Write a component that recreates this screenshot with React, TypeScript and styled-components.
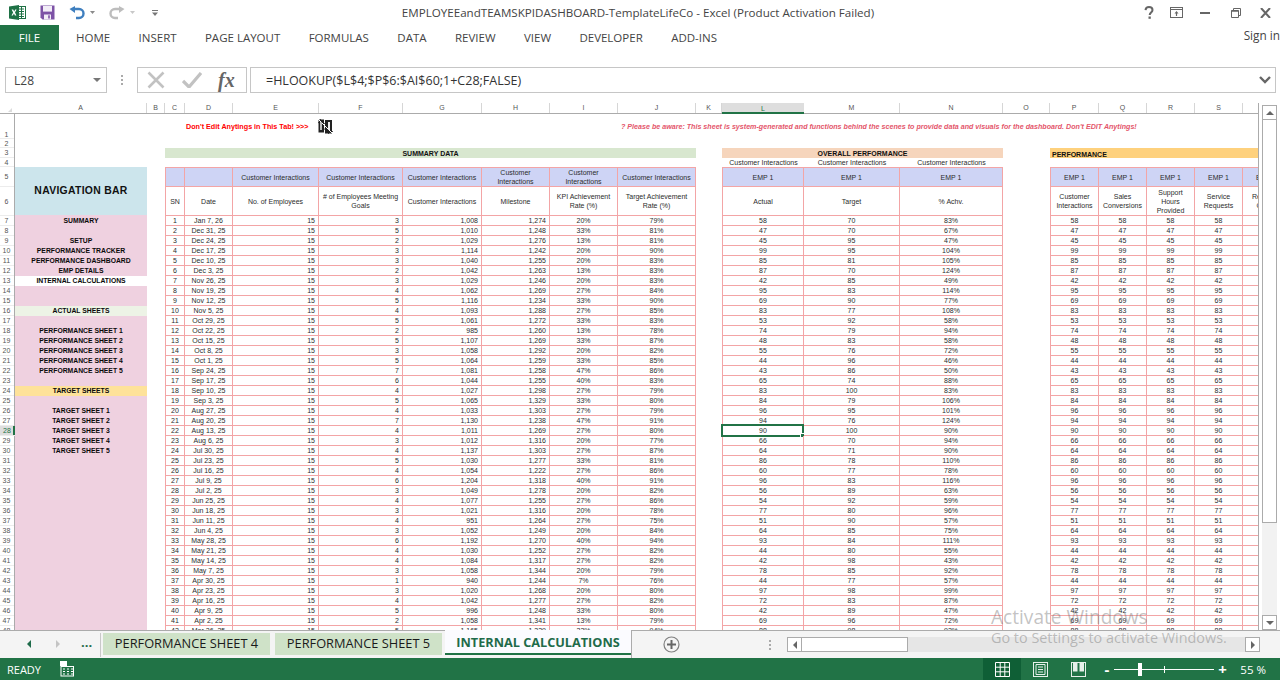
import React from "react";
import styled, { createGlobalStyle } from "styled-components";

const Global = createGlobalStyle`
  html, body { margin: 0; padding: 0; background: #fff; }
  #root { width: 1280px; height: 680px; overflow: hidden; }
`;

const UI = `"Open Sans", "Noto Sans", sans-serif`;
const CELL = `"Liberation Sans", Arial, sans-serif`;
const PINK = "#f3a5a6";
const GRAY = "#ababab";
const GREEN = "#217346";
const INK = "#2c2c2c";

const Frame = styled.div`
  position: relative;
  width: 1280px;
  height: 680px;
  display: flex;
  flex-direction: column;
  background: #fff;
  overflow: hidden;
  font-family: ${UI};
`;

/* ---------- Title bar ---------- */
const TitleBar = styled.div`
  height: 25px;
  flex: none;
  display: grid;
  grid-template-columns: 1fr auto 1fr;
  align-items: center;
`;
const Qat = styled.div`
  display: flex;
  align-items: center;
  padding-left: 9px;
`;
const QatIcon = styled.svg<{ $gap?: number }>`
  display: block;
  margin-left: ${(p) => p.$gap ?? 0}px;
`;
const TitleText = styled.div`
  font-size: 11.6px;
  color: #444;
  white-space: nowrap;
  margin-right: 4px;
`;
const WindowButtons = styled.div`
  display: flex;
  align-items: center;
  justify-content: flex-end;
  padding-right: 9px;
`;

/* ---------- Ribbon tabs ---------- */
const RibbonTabs = styled.div`
  height: 25px;
  flex: none;
  display: flex;
  align-items: center;
  position: relative;
`;
const FileTab = styled.div`
  width: 59px;
  height: 25px;
  background: ${GREEN};
  color: #fff;
  display: flex;
  align-items: center;
  justify-content: center;
  font-size: 11.5px;
  margin-right: 17px;
`;
const RibbonTab = styled.div`
  font-size: 11.5px;
  color: #444;
  margin-right: 28.4px;
  white-space: nowrap;
`;
const SignIn = styled.div`
  margin-left: auto;
  font-size: 11.8px;
  color: #444;
  white-space: nowrap;
  margin-top: -6px;
`;

/* ---------- Formula bar ---------- */
const FormulaRow = styled.div`
  height: 26px;
  flex: none;
  margin-top: 17px;
  display: flex;
  align-items: stretch;
  padding-left: 5px;
`;
const NameBox = styled.div`
  width: 102px;
  box-sizing: border-box;
  border: 1px solid #c6c6c6;
  display: flex;
  align-items: center;
  justify-content: space-between;
  padding: 0 5px 0 8px;
  font-size: 12px;
  color: #444;
`;
const DownCaret = styled.span`
  width: 0;
  height: 0;
  border-left: 4px solid transparent;
  border-right: 4px solid transparent;
  border-top: 4px solid #777;
`;
const Grip = styled.div`
  width: 30px;
  display: flex;
  flex-direction: column;
  align-items: center;
  justify-content: center;
  gap: 2px;
  span { width: 2px; height: 2px; background: #aaa; }
`;
const FnBox = styled.div`
  width: 110px;
  box-sizing: border-box;
  border: 1px solid #c6c6c6;
  display: flex;
  align-items: center;
  padding-left: 9px;
  gap: 17px;
`;
const FxText = styled.span`
  font-family: "Liberation Serif", serif;
  font-style: italic;
  font-weight: 700;
  font-size: 20px;
  color: #666;
  margin-left: -1px;
`;
const FormulaInput = styled.div`
  width: 1026px;
  margin-left: 3px;
  box-sizing: border-box;
  border: 1px solid #c6c6c6;
  display: flex;
  align-items: center;
  justify-content: space-between;
  padding: 0 4px 0 15px;
  font-size: 12.5px;
  color: #333;
`;

/* ---------- Sheet ---------- */
const SheetRow = styled.div`
  height: 527px;
  flex: none;
  margin-top: 10px;
  display: flex;
`;
const Pane = styled.div`
  width: 1259px;
  box-sizing: border-box;
  display: flex;
  flex-direction: column;
  overflow: hidden;
  border-right: 1px solid ${GRAY};
  flex: none;
`;
const ColHeader = styled.div`
  height: 11px;
  flex: none;
  display: flex;
  border-bottom: 1px solid ${GRAY};
  box-sizing: border-box;
  margin-right: -60px;
`;
const Corner = styled.div`
  width: 15px;
  flex: none;
  position: relative;
  &::after {
    content: "";
    position: absolute;
    right: 3px;
    bottom: 1px;
    border-left: 4px solid transparent;
    border-bottom: 4px solid #dcdcdc;
  }
`;
const ColLabel = styled.div<{ $w: number; $on?: boolean }>`
  width: ${(p) => p.$w}px;
  flex: none;
  box-sizing: border-box;
  display: flex;
  align-items: center;
  justify-content: center;
  font: 7px/10px ${CELL};
  color: #555;
  border-right: 1px solid #d6d6d6;
  background: ${(p) => (p.$on ? "#dedede" : "transparent")};
  ${(p) => (p.$on ? `box-shadow: inset 0 -2px 0 ${GREEN}; margin-bottom: -1px; border-right: none; color:${GREEN};` : "")}
`;
const Body = styled.div`
  flex: 1;
  min-height: 0;
  display: flex;
  overflow: hidden;
`;
const RowHeads = styled.div`
  width: 15px;
  flex: none;
  box-sizing: border-box;
  border-right: 1px solid ${GRAY};
  display: flex;
  flex-direction: column;
`;
const RowHead = styled.div<{ $h: number; $on?: boolean; $bottom?: boolean }>`
  height: ${(p) => p.$h}px;
  flex: none;
  margin-right: ${(p) => (p.$on ? -1 : 0)}px;
  box-sizing: border-box;
  display: flex;
  align-items: ${(p) => (p.$bottom ? "flex-end" : "center")};
  justify-content: center;
  padding-right: 1px;
  font-family: ${CELL};
  font-size: 7px;
  line-height: ${(p) => (p.$bottom ? 6 : 9)}px;
  color: ${(p) => (p.$on ? GREEN : "#555")};
  background: ${(p) => (p.$on ? "#dedede" : "transparent")};
  box-shadow: ${(p) => (p.$on ? `inset -2px 0 0 ${GREEN}` : "none")};
  border-bottom: 1px solid #ececec;
`;

const NavColumn = styled.div`
  width: 132px;
  flex: none;
  display: flex;
  flex-direction: column;
  padding-top: 53px;
  box-sizing: border-box;
`;
const NavTitle = styled.div`
  height: 48px;
  flex: none;
  background: #cce5ec;
  display: flex;
  align-items: center;
  justify-content: center;
  font: 700 10.4px ${CELL};
  letter-spacing: 0.3px;
  color: #111;
  padding-bottom: 2px;
  box-sizing: border-box;
`;
const NavItem = styled.div<{ $bg?: string; $h?: number }>`
  height: ${(p) => p.$h ?? 10}px;
  flex: none;
  background: ${(p) => p.$bg ?? "#efd1e0"};
  display: flex;
  align-items: center;
  justify-content: center;
  font: 700 6.8px/10px ${CELL};
  color: #0a0a0a;
  white-space: nowrap;
`;
const NavFill = styled.div`
  flex: 1;
  background: #efd1e0;
`;
const BColumn = styled.div`
  width: 18px;
  flex: none;
`;
const Workspace = styled.div`
  flex: 1;
  min-width: 0;
  display: flex;
  flex-direction: column;
`;
const Banner = styled.div`
  height: 34px;
  flex: none;
  display: grid;
  grid-template-columns: 153px 303px auto;
  grid-template-rows: 25px;
  align-items: center;
`;
const RedNote = styled.div`
  padding-left: 21px;
  font: 700 7.2px ${CELL};
  color: #ff0000;
  white-space: nowrap;
`;
const PinkNote = styled.div`
  font: italic 700 7.13px ${CELL};
  color: #e4566b;
  white-space: nowrap;
`;
const Blocks = styled.div`
  display: flex;
  align-items: flex-start;
`;
const Block = styled.div<{ $w: number; $after?: number }>`
  width: ${(p) => p.$w}px;
  flex: none;
  margin-right: ${(p) => p.$after ?? 0}px;
`;
const Band = styled.div<{ $bg: string; $left?: boolean }>`
  height: 10px;
  background: ${(p) => p.$bg};
  display: flex;
  align-items: ${(p) => (p.$left ? "flex-end" : "center")};
  justify-content: ${(p) => (p.$left ? "flex-start" : "center")};
  padding-left: ${(p) => (p.$left ? 2 : 0)}px;
  font-family: ${CELL};
  font-weight: 700;
  font-size: 7px;
  line-height: ${(p) => (p.$left ? 7 : 9)}px;
  color: #111;
  white-space: nowrap;
`;
const SubRow = styled.div<{ $cols: string }>`
  height: 9px;
  display: grid;
  grid-template-columns: ${(p) => p.$cols};
  padding-left: 1px;
`;
const SubLabel = styled.div`
  text-align: center;
  font: 7px/9px ${CELL};
  color: ${INK};
  white-space: nowrap;
`;
const Table = styled.div<{ $cols: string }>`
  display: grid;
  grid-template-columns: ${(p) => p.$cols};
  grid-template-rows: 19px 29px;
  grid-auto-rows: 10px;
  border-left: 1px solid ${PINK};
  border-top: 1px solid ${PINK};
`;
const Cell = styled.div<{ $align?: "center" | "right" }>`
  position: relative;
  box-sizing: border-box;
  border-right: 1px solid ${PINK};
  border-bottom: 1px solid ${PINK};
  display: flex;
  align-items: center;
  justify-content: ${(p) => (p.$align === "right" ? "flex-end" : "center")};
  padding: 0 ${(p) => (p.$align === "right" ? 3 : 0)}px 0 0;
  font: 7px/9px ${CELL};
  color: ${INK};
  white-space: nowrap;
`;
const HeadCell = styled(Cell)<{ $fill?: boolean }>`
  background: ${(p) => (p.$fill ? "#ced4f5" : "#fff")};
  padding: 0 2px;
  white-space: normal;
  text-align: center;
`;
const Selection = styled.div`
  position: absolute;
  left: -2px;
  right: -1px;
  top: -2px;
  bottom: -2px;
  border: 2px solid ${GREEN};
  pointer-events: none;
  &::after {
    content: "";
    position: absolute;
    right: -3px;
    bottom: -3px;
    width: 5px;
    height: 5px;
    background: ${GREEN};
    border: 1px solid #fff;
    box-sizing: border-box;
  }
`;

/* ---------- Vertical scrollbar ---------- */
const VScroll = styled.div`
  width: 15px;
  margin-left: 3px;
  flex: none;
  display: flex;
  flex-direction: column;
  padding-top: 2px;
  box-sizing: border-box;
`;
const VButton = styled.div`
  height: 15px;
  flex: none;
  box-sizing: border-box;
  border: 1px solid ${GRAY};
  display: flex;
  align-items: center;
  justify-content: center;
`;
type Dir = "up" | "down" | "left" | "right";
const Tri = styled.span<{ $dir: Dir; $c?: string; $gap?: number }>`
  width: 0;
  height: 0;
  margin-left: ${(p) => p.$gap ?? 0}px;
  ${(p) =>
    p.$dir === "up"
      ? `border-left:4px solid transparent;border-right:4px solid transparent;border-bottom:4px solid ${p.$c ?? "#666"};`
      : p.$dir === "down"
      ? `border-left:4px solid transparent;border-right:4px solid transparent;border-top:4px solid ${p.$c ?? "#666"};`
      : p.$dir === "left"
      ? `border-top:4px solid transparent;border-bottom:4px solid transparent;border-right:4px solid ${p.$c ?? "#666"};`
      : `border-top:4px solid transparent;border-bottom:4px solid transparent;border-left:4px solid ${p.$c ?? "#666"};`}
`;
const VThumb = styled.div`
  height: 403px;
  flex: none;
  box-sizing: border-box;
  border: 1px solid ${GRAY};
  border-top: none;
  background: #fff;
`;
const VTrack = styled.div`
  flex: 1;
  background: #f2f2f2;
`;

/* ---------- Sheet tabs ---------- */
const TabStrip = styled.div`
  height: 28px;
  flex: none;
  box-sizing: border-box;
  background: #f4f4f4;
  display: flex;
  align-items: flex-start;
  position: relative;
`;
const TabLine = styled.div`
  position: absolute;
  left: 0;
  right: 0;
  top: 0;
  height: 1px;
  background: ${GRAY};
`;
const NavArrows = styled.div`
  width: 100px;
  height: 27px;
  flex: none;
  display: flex;
  align-items: center;
  padding-left: 27px;
  box-sizing: border-box;
`;
const Ellipsis = styled.span`
  margin-left: 21px;
  font: 700 13px ${UI};
  color: #1f6b4a;
  margin-top: -3px;
`;
const SheetTabs = styled.div`
  display: flex;
  align-items: flex-start;
  padding-left: 2px;
  border-left: 1px solid #c8c8c8;
  height: 24px;
  margin-top: 3px;
  z-index: 1;
`;
const GreenTab = styled.div`
  width: 167px;
  height: 22px;
  flex: none;
  margin-right: 5px;
  background: #cfe2c8;
  display: flex;
  align-items: center;
  justify-content: center;
  font-size: 12.8px;
  color: #1a1a1a;
  white-space: nowrap;
  padding-bottom: 2px;
  box-sizing: border-box;
`;
const ActiveTab = styled.div`
  width: 186px;
  height: 25px;
  flex: none;
  margin: -3px 0 0 -2px;
  box-sizing: border-box;
  background: #fbfbff;
  border-bottom: 2px solid ${GREEN};
  display: flex;
  align-items: center;
  justify-content: center;
  font-size: 12.7px;
  font-weight: 700;
  color: #1f6b4a;
  white-space: nowrap;
  position: relative;
  z-index: 2;
`;
const AddBox = styled.div`
  width: 156px;
  height: 27px;
  flex: none;
  display: flex;
  align-items: center;
  position: relative;
  padding-left: 31px;
  box-sizing: border-box;
  border-left: 1px solid ${GRAY};
  z-index: 2;
  margin-top: 1px;
`;
const AddGrip = styled(Grip)`
  width: 2px;
  margin-left: 89px;
`;
const HScroll = styled.div`
  height: 15px;
  width: 473px;
  flex: none;
  margin: 7px 0 0 0;
  display: flex;
  background: #e6e6e6;
  z-index: 2;
`;
const HButton = styled.div`
  width: 15px;
  flex: none;
  box-sizing: border-box;
  border: 1px solid ${GRAY};
  background: #fff;
  display: flex;
  align-items: center;
  justify-content: center;
`;
const HThumb = styled.div`
  width: 106px;
  flex: none;
  box-sizing: border-box;
  border: 1px solid ${GRAY};
  border-left: none;
  background: #fff;
`;
const HTrack = styled.div`
  flex: 1;
`;

/* ---------- Status bar ---------- */
const StatusBar = styled.div`
  height: 22px;
  flex: none;
  background: ${GREEN};
  color: #fff;
  display: flex;
  align-items: center;
  font-size: 11px;
`;
const Ready = styled.span`
  margin-left: 7px;
  width: 53px;
`;
const StatusRight = styled.div`
  margin-left: auto;
  display: flex;
  align-items: center;
  height: 100%;
`;
const ViewButton = styled.div<{ $on?: boolean }>`
  width: 38px;
  height: 100%;
  display: flex;
  align-items: center;
  justify-content: center;
  background: ${(p) => (p.$on ? "#0f5f36" : "transparent")};
`;
const Zoom = styled.div`
  display: flex;
  align-items: center;
  margin-left: 6px;
  gap: 4px;
`;
const ZoomSign = styled.span`
  font-weight: 700;
  font-size: 15px;
  line-height: 18px;
  width: 7px;
  text-align: center;
`;
const Slider = styled.div`
  position: relative;
  width: 100px;
  height: 1px;
  background: #fff;
  &::before {
    content: "";
    position: absolute;
    left: 50px;
    top: -3px;
    width: 1px;
    height: 7px;
    background: #fff;
  }
`;
const Knob = styled.span`
  position: absolute;
  left: 24px;
  top: -6px;
  width: 4px;
  height: 13px;
  background: #fff;
`;
const Percent = styled.span`
  margin: 0 14px 0 15px;
  white-space: nowrap;
  font-size: 11.5px;
`;

/* ---------- Watermark ---------- */
const Watermark = styled.div`
  position: absolute;
  left: 991px;
  top: 604px;
  color: rgba(110, 110, 110, 0.42);
  pointer-events: none;
  z-index: 5;
`;
const WmBig = styled.div`
  font-size: 19.1px;
  line-height: 26px;
  white-space: nowrap;
`;
const WmSmall = styled.div`
  font-size: 14.4px;
  line-height: 20px;
  margin-top: -2px;
  white-space: nowrap;
`;

/* ---------- Data ---------- */
const RAW = `Jan 7, 26|3|1,008|1,274|20%|79%|58|70|83%
Dec 31, 25|5|1,010|1,248|33%|81%|47|70|67%
Dec 24, 25|2|1,029|1,276|13%|81%|45|95|47%
Dec 17, 25|3|1,114|1,242|20%|90%|99|95|104%
Dec 10, 25|3|1,040|1,255|20%|83%|85|81|105%
Dec 3, 25|2|1,042|1,263|13%|83%|87|70|124%
Nov 26, 25|3|1,029|1,246|20%|83%|42|85|49%
Nov 19, 25|4|1,062|1,269|27%|84%|95|83|114%
Nov 12, 25|5|1,116|1,234|33%|90%|69|90|77%
Nov 5, 25|4|1,093|1,288|27%|85%|83|77|108%
Oct 29, 25|5|1,061|1,272|33%|83%|53|92|58%
Oct 22, 25|2|985|1,260|13%|78%|74|79|94%
Oct 15, 25|5|1,107|1,269|33%|87%|48|83|58%
Oct 8, 25|3|1,058|1,292|20%|82%|55|76|72%
Oct 1, 25|5|1,064|1,259|33%|85%|44|96|46%
Sep 24, 25|7|1,081|1,258|47%|86%|43|86|50%
Sep 17, 25|6|1,044|1,255|40%|83%|65|74|88%
Sep 10, 25|4|1,027|1,298|27%|79%|83|100|83%
Sep 3, 25|5|1,065|1,329|33%|80%|84|79|106%
Aug 27, 25|4|1,033|1,303|27%|79%|96|95|101%
Aug 20, 25|7|1,130|1,238|47%|91%|94|76|124%
Aug 13, 25|4|1,011|1,269|27%|80%|90|100|90%
Aug 6, 25|3|1,012|1,316|20%|77%|66|70|94%
Jul 30, 25|4|1,137|1,303|27%|87%|64|71|90%
Jul 23, 25|5|1,030|1,277|33%|81%|86|78|110%
Jul 16, 25|4|1,054|1,222|27%|86%|60|77|78%
Jul 9, 25|6|1,204|1,318|40%|91%|96|83|116%
Jul 2, 25|3|1,049|1,278|20%|82%|56|89|63%
Jun 25, 25|4|1,077|1,255|27%|86%|54|92|59%
Jun 18, 25|3|1,021|1,316|20%|78%|77|80|96%
Jun 11, 25|4|951|1,264|27%|75%|51|90|57%
Jun 4, 25|3|1,052|1,249|20%|84%|64|85|75%
May 28, 25|6|1,192|1,270|40%|94%|93|84|111%
May 21, 25|4|1,030|1,252|27%|82%|44|80|55%
May 14, 25|4|1,084|1,317|27%|82%|42|98|43%
May 7, 25|3|1,058|1,344|20%|79%|78|85|92%
Apr 30, 25|1|940|1,244|7%|76%|44|77|57%
Apr 23, 25|3|1,020|1,268|20%|80%|97|98|99%
Apr 16, 25|4|1,042|1,277|27%|82%|72|83|87%
Apr 9, 25|5|996|1,248|33%|80%|42|89|47%
Apr 2, 25|2|1,058|1,341|13%|79%|69|96|72%
Mar 26, 25|5|1,165|1,329|33%|94%|88|98|92%`;
const ROWS = RAW.split("\n").map((l) => l.split("|"));

const COLS: [string, number][] = [
  ["A", 132], ["B", 18], ["C", 20], ["D", 48], ["E", 86], ["F", 84], ["G", 79], ["H", 68],
  ["I", 68], ["J", 78], ["K", 26], ["L", 82], ["M", 96], ["N", 103], ["O", 47], ["P", 49],
  ["Q", 48], ["R", 48], ["S", 48], ["T", 48],
];

const ROW_HEIGHTS = [25, 9, 10, 9, 20, 29, ...Array(42).fill(10)];

type NavEntry = { t?: string; bg?: string };
const NAV: NavEntry[] = [
  { t: "SUMMARY" }, {}, { t: "SETUP" }, { t: "PERFORMANCE TRACKER" }, { t: "PERFORMANCE DASHBOARD" },
  { t: "EMP DETAILS" }, { t: "INTERNAL CALCULATIONS", bg: "#ffffff" }, {}, {},
  { t: "ACTUAL SHEETS", bg: "#edf3e6" }, {}, { t: "PERFORMANCE SHEET 1" }, { t: "PERFORMANCE SHEET 2" },
  { t: "PERFORMANCE SHEET 3" }, { t: "PERFORMANCE SHEET 4" }, { t: "PERFORMANCE SHEET 5" }, {},
  { t: "TARGET SHEETS", bg: "#fee29a" }, {}, { t: "TARGET SHEET 1" }, { t: "TARGET SHEET 2" },
  { t: "TARGET SHEET 3" }, { t: "TARGET SHEET 4" }, { t: "TARGET SHEET 5" },
];

const SUM_COLS = "19px 48px 86px 84px 79px 68px 68px 78px";
const ALL_COLS = "81px 96px 103px";
const PERF_COLS = "48px 48px 48px 48px 48px";
const CI = "Customer Interactions";

/* ---------- Icons ---------- */
const ExcelLogo = () => (
  <QatIcon width="17" height="15" viewBox="0 0 17 15">
    <rect x="7" y="1.5" width="9.5" height="12" fill="#fff" stroke="#1e7145" />
    <path d="M10 4h5M10 6.5h5M10 9h5M10 11.5h5M12.5 2v11" stroke="#1e7145" strokeWidth="1" />
    <path d="M0 1.5 10 0v15L0 13.5z" fill="#1e7145" />
    <path d="M2.6 4.4 4.1 7.4 2.5 10.6h1.4l1-2.2 1 2.2h1.5L6 7.4l1.6-3H6.2l-1 2-1-2z" fill="#fff" />
  </QatIcon>
);
const SaveIcon = () => (
  <QatIcon $gap={14} width="15" height="15" viewBox="0 0 15 15">
    <path d="M0.5 .5h14v14H2.5l-2-2z" fill="#7d52a6" />
    <rect x="3" y="1" width="9" height="5.6" fill="#f2edf7" />
    <rect x="4" y="9.5" width="7" height="5" fill="#f2edf7" />
    <rect x="8.2" y="10.3" width="1.6" height="3.2" fill="#7d52a6" />
  </QatIcon>
);
const UndoIcon = () => (
  <QatIcon $gap={14} width="16" height="14" viewBox="0 0 16 14">
    <path d="M4 3h6a4.5 4.5 0 0 1 0 9H7" fill="none" stroke="#3f7fbf" strokeWidth="2.4" />
    <path d="M6 0 0.5 3 6 7z" fill="#3f7fbf" />
  </QatIcon>
);
const RedoIcon = () => (
  <QatIcon $gap={14} width="16" height="14" viewBox="0 0 16 14">
    <path d="M12 3H6a4.5 4.5 0 0 0 0 9h3" fill="none" stroke="#bdbdbd" strokeWidth="2.4" />
    <path d="M10 0l5.500 3L10 7z" fill="#bdbdbd" />
  </QatIcon>
);
const SmallChevron = ({ c, gap }: { c: string; gap: number }) => (
  <QatIcon $gap={gap} width="5" height="4" viewBox="0 0 5 4">
    <path d="M0 0h5L2.500 3z" fill={c} />
  </QatIcon>
);
const Customize = () => (
  <QatIcon $gap={17} width="6" height="6" viewBox="0 0 6 6">
    <path d="M0 0h6v1H0zM0 2.500h6L3 6z" fill="#777" />
  </QatIcon>
);
const WinHelp = () => (
  <QatIcon width="10" height="14" viewBox="0 0 10 14">
    <path d="M1.500 4.200C1.700 2 3.200 1 5 1c2 0 3.500 1.200 3.500 3 0 2.500-2.800 2.500-2.800 5" fill="none" stroke="#666" strokeWidth="2" />
    <rect x="4.500" y="10.500" width="2.300" height="2.300" fill="#666" />
  </QatIcon>
);
const WinRibbon = () => (
  <QatIcon $gap={16} width="13" height="11" viewBox="0 0 13 11">
    <rect x=".5" y=".5" width="12" height="10" fill="none" stroke="#666" />
    <path d="M1 2.500h11" stroke="#666" />
    <path d="M6.500 4 4.500 6.500h1.400V9h1.200V6.500h1.400z" fill="#666" />
  </QatIcon>
);
const WinMin = () => (
  <QatIcon $gap={17} width="10" height="4" viewBox="0 0 10 4">
    <rect y="1" width="10" height="2" fill="#666" />
  </QatIcon>
);
const WinRestore = () => (
  <QatIcon $gap={21} width="10" height="10" viewBox="0 0 10 10">
    <path d="M.5 2.500h7v7h-7zM2.500 2.500v-2h7v7h-2" fill="none" stroke="#666" />
    <path d="M.5 3h7" stroke="#666" strokeWidth="1.500" />
  </QatIcon>
);
const WinClose = () => (
  <QatIcon $gap={19} width="11" height="10" viewBox="0 0 11 10">
    <path d="M1 0l9 10M10 0 1 10" stroke="#666" strokeWidth="2" />
  </QatIcon>
);
const XMark = () => (
  <svg width="18" height="18" viewBox="0 0 18 18">
    <path d="M1.500 1.500l15 15M16.500 1.500l-15 15" stroke="#c2c2c2" strokeWidth="2.600" />
  </svg>
);
const CheckMark = () => (
  <svg width="20" height="16" viewBox="0 0 20 16">
    <path d="M1 9l6 6L19 1" fill="none" stroke="#c2c2c2" strokeWidth="3.200" />
  </svg>
);
const ChevronBold = () => (
  <svg width="12" height="8" viewBox="0 0 12 8">
    <path d="M1 1l5 5 5-5" fill="none" stroke="#666" strokeWidth="2.400" />
  </svg>
);
const BrokenPicSvg = styled.svg`
  display: block;
  margin-top: -1px;
`;
const BrokenPic = () => (
  <BrokenPicSvg width="15" height="15" viewBox="0 0 15 15">
    <rect x="0.500" y="0.500" width="5.500" height="13" fill="#222" />
    <rect x="7" y="1" width="7" height="13.500" fill="#222" />
    <path d="M0 0l15 15" stroke="#fff" strokeWidth="1" />
    <path d="M2 0l13 13M0 3l11 12" stroke="#222" strokeWidth=".8" />
    <rect x="10" y="3" width="2" height="8" fill="#eee" />
    <rect x="2" y="3" width="2" height="8" fill="#bbb" />
  </BrokenPicSvg>
);
const MacroIcon = () => (
  <svg width="14" height="16" viewBox="0 0 14 16">
    <rect x="0" y="0" width="7" height="5" fill="#fff" />
    <rect x="1" y="5.500" width="12.500" height="9.500" fill="none" stroke="#fff" />
    <path d="M3 8h2M7 8h2M11 8h2M3 10.500h2M7 10.500h2M11 10.500h2M3 13h2M7 13h2M11 13h2" stroke="#fff" />
  </svg>
);
const NormalView = () => (
  <svg width="15" height="15" viewBox="0 0 15 15">
    <path d="M.5.5h14v14H.5zM.5 5.200h14M.5 9.800h14M5.200.5v14M9.800.5v14" fill="none" stroke="#fff" />
  </svg>
);
const LayoutView = () => (
  <svg width="15" height="15" viewBox="0 0 15 15">
    <rect x=".5" y=".5" width="14" height="14" fill="none" stroke="#e6f0ea" />
    <path d="M3 2.500h9v10H3zM5 5h5M5 7.500h5M5 10h5" fill="none" stroke="#e6f0ea" />
  </svg>
);
const BreakView = () => (
  <svg width="15" height="15" viewBox="0 0 15 15">
    <rect x=".5" y=".5" width="14" height="14" fill="none" stroke="#e6f0ea" />
    <rect x="2" y="1" width="4.500" height="8.500" fill="#e6f0ea" />
    <rect x="8.500" y="1" width="4.500" height="8.500" fill="#e6f0ea" />
  </svg>
);
const AddCircle = () => (
  <svg width="17" height="17" viewBox="0 0 17 17">
    <circle cx="8.500" cy="8.500" r="7.500" fill="none" stroke="#808080" strokeWidth="1.200" />
    <path d="M8.500 4v9M4 8.500h9" stroke="#666" strokeWidth="2" />
  </svg>
);

export default function App() {
  return (
    <Frame>
      <Global />
      <TitleBar>
        <Qat>
          <ExcelLogo />
          <SaveIcon />
          <UndoIcon />
          <SmallChevron c="#8a8a8a" gap={5} />
          <RedoIcon />
          <SmallChevron c="#c8c8c8" gap={5} />
          <Customize />
        </Qat>
        <TitleText>EMPLOYEEandTEAMSKPIDASHBOARD-TemplateLifeCo - Excel (Product Activation Failed)</TitleText>
        <WindowButtons>
          <WinHelp />
          <WinRibbon />
          <WinMin />
          <WinRestore />
          <WinClose />
        </WindowButtons>
      </TitleBar>

      <RibbonTabs>
        <FileTab>FILE</FileTab>
        {["HOME", "INSERT", "PAGE LAYOUT", "FORMULAS", "DATA", "REVIEW", "VIEW", "DEVELOPER", "ADD-INS"].map((t) => (
          <RibbonTab key={t}>{t}</RibbonTab>
        ))}
        <SignIn>Sign in</SignIn>
      </RibbonTabs>

      <FormulaRow>
        <NameBox>
          L28
          <DownCaret />
        </NameBox>
        <Grip>
          <span />
          <span />
          <span />
        </Grip>
        <FnBox>
          <XMark />
          <CheckMark />
          <FxText>fx</FxText>
        </FnBox>
        <FormulaInput>
          =HLOOKUP($L$4;$P$6:$AI$60;1+C28;FALSE)
          <ChevronBold />
        </FormulaInput>
      </FormulaRow>

      <SheetRow>
        <Pane>
          <ColHeader>
            <Corner />
            {COLS.map(([c, w]) => (
              <ColLabel key={c} $w={w} $on={c === "L"}>
                {c}
              </ColLabel>
            ))}
          </ColHeader>
          <Body>
            <RowHeads>
              {ROW_HEIGHTS.map((h, i) => (
                <RowHead key={i} $h={h} $on={i + 1 === 28} $bottom={i === 0}>
                  {i + 1}
                </RowHead>
              ))}
            </RowHeads>
            <NavColumn>
              <NavTitle>NAVIGATION BAR</NavTitle>
              {NAV.map((n, i) => (
                <NavItem key={i} $bg={n.bg} $h={i === 0 ? 11 : 10}>
                  {n.t}
                </NavItem>
              ))}
              <NavFill />
            </NavColumn>
            <BColumn />
            <Workspace>
              <Banner>
                <RedNote>Don't Edit Anytings in This Tab! &gt;&gt;&gt;</RedNote>
                <BrokenPic />
                <PinkNote>
                  ? Please be aware: This sheet is system-generated and functions behind the scenes to provide data and
                  visuals for the dashboard. Don't EDIT Anytings!
                </PinkNote>
              </Banner>
              <Blocks>
                <Block $w={531} $after={26}>
                  <Band $bg="#d8e7cf">SUMMARY DATA</Band>
                  <SubRow $cols="1fr" />
                  <Table $cols={SUM_COLS}>
                    <HeadCell $fill />
                    <HeadCell $fill />
                    <HeadCell $fill>{CI}</HeadCell>
                    <HeadCell $fill>{CI}</HeadCell>
                    <HeadCell $fill>{CI}</HeadCell>
                    <HeadCell $fill>{CI}</HeadCell>
                    <HeadCell $fill>{CI}</HeadCell>
                    <HeadCell $fill>{CI}</HeadCell>
                    <HeadCell>SN</HeadCell>
                    <HeadCell>Date</HeadCell>
                    <HeadCell>No. of Employees</HeadCell>
                    <HeadCell># of Employees Meeting Goals</HeadCell>
                    <HeadCell>{CI}</HeadCell>
                    <HeadCell>Milestone</HeadCell>
                    <HeadCell>KPI Achievement Rate (%)</HeadCell>
                    <HeadCell>Target Achievement Rate (%)</HeadCell>
                    {ROWS.map((r, i) => (
                      <React.Fragment key={i}>
                        <Cell>{i + 1}</Cell>
                        <Cell>{r[0]}</Cell>
                        <Cell $align="right">15</Cell>
                        <Cell $align="right">{r[1]}</Cell>
                        <Cell $align="right">{r[2]}</Cell>
                        <Cell $align="right">{r[3]}</Cell>
                        <Cell>{r[4]}</Cell>
                        <Cell>{r[5]}</Cell>
                      </React.Fragment>
                    ))}
                  </Table>
                </Block>
                <Block $w={281} $after={47}>
                  <Band $bg="#f6d5bc">OVERALL PERFORMANCE</Band>
                  <SubRow $cols={ALL_COLS}>
                    <SubLabel>{CI}</SubLabel>
                    <SubLabel>{CI}</SubLabel>
                    <SubLabel>{CI}</SubLabel>
                  </SubRow>
                  <Table $cols={ALL_COLS}>
                    <HeadCell $fill>EMP 1</HeadCell>
                    <HeadCell $fill>EMP 1</HeadCell>
                    <HeadCell $fill>EMP 1</HeadCell>
                    <HeadCell>Actual</HeadCell>
                    <HeadCell>Target</HeadCell>
                    <HeadCell>% Achv.</HeadCell>
                    {ROWS.map((r, i) => (
                      <React.Fragment key={i}>
                        <Cell>
                          {r[6]}
                          {i === 21 && <Selection />}
                        </Cell>
                        <Cell>{r[7]}</Cell>
                        <Cell>{r[8]}</Cell>
                      </React.Fragment>
                    ))}
                  </Table>
                </Block>
                <Block $w={241}>
                  <Band $bg="#fed17d" $left>
                    PERFORMANCE
                  </Band>
                  <SubRow $cols="1fr" />
                  <Table $cols={PERF_COLS}>
                    <HeadCell $fill>EMP 1</HeadCell>
                    <HeadCell $fill>EMP 1</HeadCell>
                    <HeadCell $fill>EMP 1</HeadCell>
                    <HeadCell $fill>EMP 1</HeadCell>
                    <HeadCell $fill>EMP 1</HeadCell>
                    <HeadCell>Customer Interactions</HeadCell>
                    <HeadCell>Sales Conversions</HeadCell>
                    <HeadCell>Support Hours Provided</HeadCell>
                    <HeadCell>Service Requests</HeadCell>
                    <HeadCell>Resolved Cases</HeadCell>
                    {ROWS.map((r, i) => (
                      <React.Fragment key={i}>
                        <Cell>{r[6]}</Cell>
                        <Cell>{r[6]}</Cell>
                        <Cell>{r[6]}</Cell>
                        <Cell>{r[6]}</Cell>
                        <Cell>{r[6]}</Cell>
                      </React.Fragment>
                    ))}
                  </Table>
                </Block>
              </Blocks>
            </Workspace>
          </Body>
        </Pane>
        <VScroll>
          <VButton>
            <Tri $dir="up" />
          </VButton>
          <VThumb />
          <VTrack />
          <VButton>
            <Tri $dir="down" />
          </VButton>
        </VScroll>
      </SheetRow>

      <TabStrip>
        <TabLine />
        <NavArrows>
          <Tri $dir="left" $c="#1f6b4a" />
          <Tri $dir="right" $c="#c4c4c4" $gap={25} />
          <Ellipsis>...</Ellipsis>
        </NavArrows>
        <SheetTabs>
          <GreenTab>PERFORMANCE SHEET 4</GreenTab>
          <GreenTab>PERFORMANCE SHEET 5</GreenTab>
          <ActiveTab>INTERNAL CALCULATIONS</ActiveTab>
        </SheetTabs>
        <AddBox>
          <AddCircle />
          <AddGrip>
            <span />
            <span />
            <span />
          </AddGrip>
        </AddBox>
        <HScroll>
          <HButton>
            <Tri $dir="left" />
          </HButton>
          <HThumb />
          <HTrack />
          <HButton>
            <Tri $dir="right" />
          </HButton>
        </HScroll>
      </TabStrip>

      <StatusBar>
        <Ready>READY</Ready>
        <MacroIcon />
        <StatusRight>
          <ViewButton $on>
            <NormalView />
          </ViewButton>
          <ViewButton>
            <LayoutView />
          </ViewButton>
          <ViewButton>
            <BreakView />
          </ViewButton>
          <Zoom>
            <ZoomSign>-</ZoomSign>
            <Slider>
              <Knob />
            </Slider>
            <ZoomSign>+</ZoomSign>
          </Zoom>
          <Percent>55 %</Percent>
        </StatusRight>
      </StatusBar>

      <Watermark>
        <WmBig>Activate Windows</WmBig>
        <WmSmall>Go to Settings to activate Windows.</WmSmall>
      </Watermark>
    </Frame>
  );
}
